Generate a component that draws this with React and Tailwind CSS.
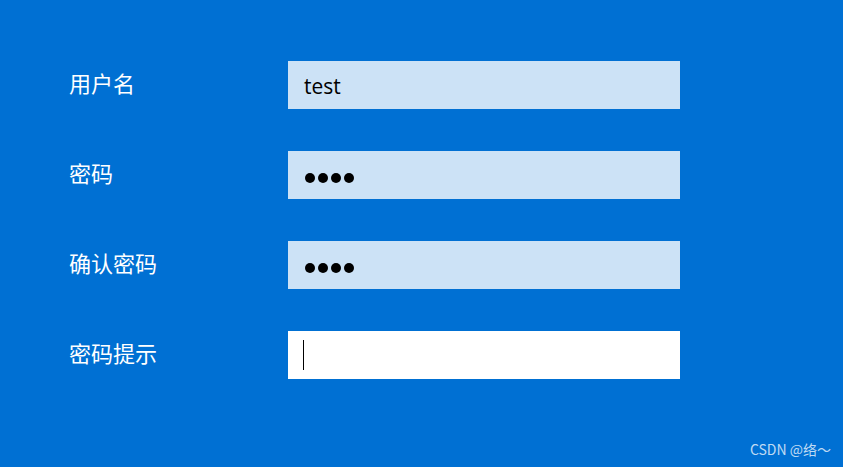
import React from 'react';

const rows = [
  { label: '用户名', kind: 'text', value: 'test' },
  { label: '密码', kind: 'password', value: 4 },
  { label: '确认密码', kind: 'password', value: 4 },
  { label: '密码提示', kind: 'focus' },
];

function Field({ kind, value }) {
  if (kind === 'text') {
    return (
      <div className="w-[392px] h-[48px] bg-[#cce2f6] flex items-center pl-[16px] pt-[3px] text-[21px] text-black font-['Open_Sans','Noto_Sans',sans-serif]">
        {value}
      </div>
    );
  }
  if (kind === 'password') {
    return (
      <div className="w-[392px] h-[48px] bg-[#cce2f6] flex items-center pl-[17px] pt-[6px] gap-[3px]">
        {Array.from({ length: value }).map((_, i) => (
          <span key={i} className="w-[10px] h-[10px] rounded-full bg-black" />
        ))}
      </div>
    );
  }
  return (
    <div className="w-[392px] h-[48px] bg-white flex items-center pl-[15px]">
      <span className="w-px h-[30px] bg-black" />
    </div>
  );
}

export default function App() {
  return (
    <div className="relative w-[843px] h-[467px] bg-[#0070d3] overflow-hidden">
      <div className="flex flex-col gap-[42px] pt-[61px] pl-[69px]">
        {rows.map((r) => (
          <div key={r.label} className="flex items-center h-[48px]">
            <div className="w-[219px] pb-[5px] text-white text-[22px] font-['Noto_Sans_CJK_SC',sans-serif]">
              {r.label}
            </div>
            <Field kind={r.kind} value={r.value} />
          </div>
        ))}
      </div>
      <div className="absolute right-[12px] bottom-[7px] text-[14px] text-white/75 font-['Noto_Sans_CJK_SC',sans-serif]">
        CSDN @络～
      </div>
    </div>
  );
}
